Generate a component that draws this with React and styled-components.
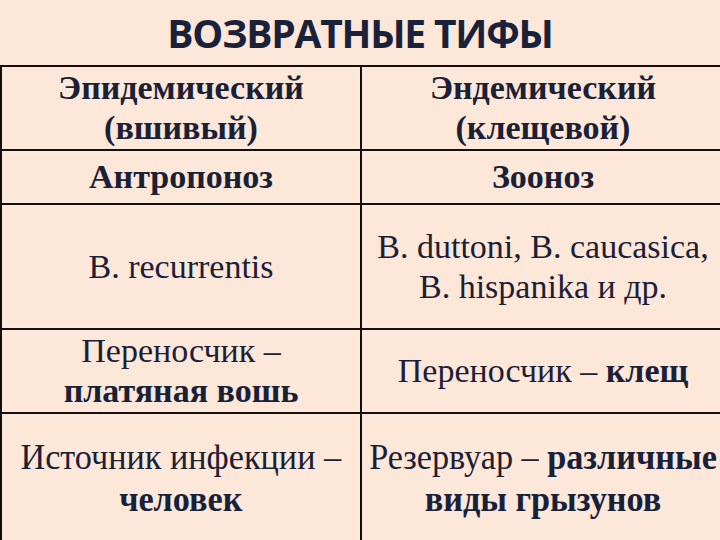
import styled, { createGlobalStyle } from "styled-components";

const GlobalStyle = createGlobalStyle`
  html, body {
    margin: 0;
    padding: 0;
    background: #fce7d9;
  }
`;

const Page = styled.div`
  width: 720px;
  height: 540px;
  background: #fce7d9;
  overflow: hidden;
  display: flex;
  flex-direction: column;
`;

const Title = styled.h1`
  margin: 0;
  height: 65px;
  flex-shrink: 0;
  display: flex;
  align-items: center;
  justify-content: center;
  font-family: "Open Sans", sans-serif;
  font-weight: 700;
  font-size: 39px;
  letter-spacing: -1.2px;
  color: #19223a;
`;

const Table = styled.div`
  width: 724px;
  flex-shrink: 0;
  display: grid;
  grid-template-columns: 360px 364px;
  grid-template-rows: 84px 54px 125px 84px 140px;
  border-top: 2px solid #1a0e0c;
  border-left: 2px solid #1a0e0c;
  box-sizing: border-box;
`;

const Cell = styled.div`
  font-family: "Liberation Serif", serif;
  font-size: ${(p) => p.$size}px;
  line-height: ${(p) => p.$lh}px;
  font-weight: ${(p) => (p.$bold ? 700 : 400)};
  color: #1a2036;
  display: flex;
  flex-direction: column;
  align-items: center;
  justify-content: ${(p) => (p.$top ? "flex-start" : "center")};
  padding-top: ${(p) => (p.$top ? 22 : 0)}px;
  text-align: center;
  white-space: nowrap;
  border-right: 2px solid #1a0e0c;
  border-bottom: 2px solid #1a0e0c;
  box-shadow: inset 0 0 0 3px #fbe9dd;

  b {
    color: #17213a;
  }
`;

const Squeezed = styled.div`
  display: inline-block;
  transform: scaleX(${(p) => p.$x});
  transform-origin: center;
`;

export default function App() {
  return (
    <>
      <GlobalStyle />
      <Page>
        <Title>ВОЗВРАТНЫЕ ТИФЫ</Title>
        <Table>
          <Cell $bold $size={34} $lh={40}>
            <div>Эпидемический</div>
            <div>(вшивый)</div>
          </Cell>
          <Cell $bold $size={34} $lh={40}>
            <div>Эндемический</div>
            <div>(клещевой)</div>
          </Cell>
          <Cell $bold $size={34} $lh={40}>
            <div>Антропоноз</div>
          </Cell>
          <Cell $bold $size={34} $lh={40}>
            <div>Зооноз</div>
          </Cell>
          <Cell $size={34} $lh={40}>
            <div>B. recurrentis</div>
          </Cell>
          <Cell $size={34} $lh={40}>
            <div>B. duttoni, B. caucasica,</div>
            <div>B. hispanika и др.</div>
          </Cell>
          <Cell $size={34} $lh={40}>
            <div>Переносчик –</div>
            <div>
              <b>платяная вошь</b>
            </div>
          </Cell>
          <Cell $size={34} $lh={40}>
            <div>
              Переносчик – <b>клещ</b>
            </div>
          </Cell>
          <Cell $top $size={36} $lh={42}>
            <Squeezed $x={0.95}>
              <div>Источник инфекции –</div>
              <div>
                <b>человек</b>
              </div>
            </Squeezed>
          </Cell>
          <Cell $top $size={36} $lh={42}>
            <Squeezed $x={0.95}>
              <div>
                Резервуар – <b>различные</b>
              </div>
              <div>
                <b>виды грызунов</b>
              </div>
            </Squeezed>
          </Cell>
        </Table>
      </Page>
    </>
  );
}
